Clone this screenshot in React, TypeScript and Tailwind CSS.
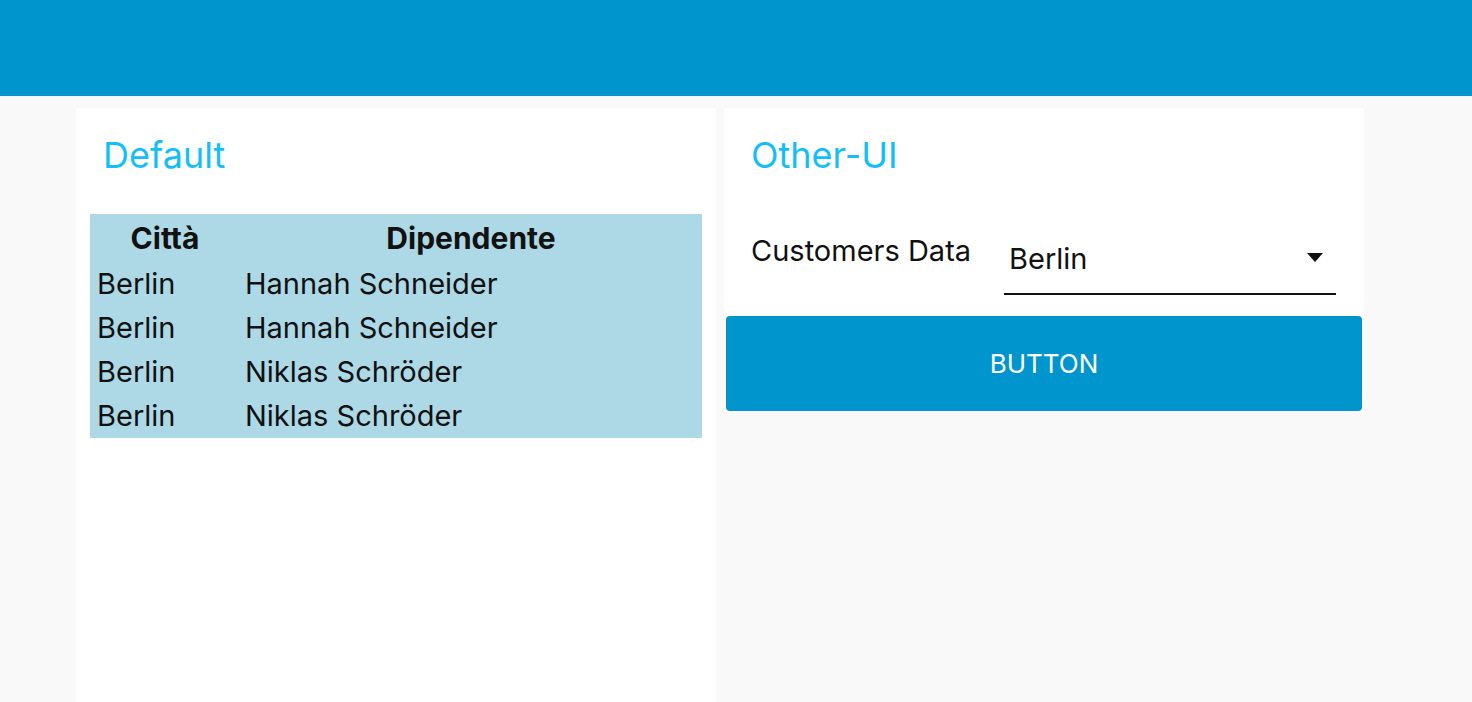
import React from 'react';

interface Row {
    city: string;
    employee: string;
}

const rows: Row[] = [
    { city: 'Berlin', employee: 'Hannah Schneider' },
    { city: 'Berlin', employee: 'Hannah Schneider' },
    { city: 'Berlin', employee: 'Niklas Schröder' },
    { city: 'Berlin', employee: 'Niklas Schröder' },
];

export default function App() {
    return (
        <div className="min-h-screen bg-[#f9f9f9] font-['Inter','Liberation_Sans',sans-serif] text-[#111]">
            {/* Barra superiore */}
            <div className="h-[96px] bg-[#0095cc]" />

            <div className="flex items-start gap-2 pl-[76px] pt-3">
                {/* Card sinistra */}
                <div className="w-[640px] h-[600px] bg-white">
                    <h2 className="pl-[27px] mt-[25px] text-[36px] leading-[44px] text-[#14bef7]">Default</h2>
                    <table className="mx-[14px] mt-[37px] w-[612px] bg-[#add8e6] text-[29px] border-collapse">
                        <thead>
                            <tr className="h-[48px]">
                                <th className="w-[150px] text-[30px] font-bold text-center">Città</th>
                                <th className="text-[30px] font-bold text-center">Dipendente</th>
                            </tr>
                        </thead>
                        <tbody>
                            {rows.map((row, i) => (
                                <tr key={i} className="h-[44px]">
                                    <td className="pl-[7px] leading-[44px]">{row.city}</td>
                                    <td className="pl-[5px] leading-[44px]">{row.employee}</td>
                                </tr>
                            ))}
                        </tbody>
                    </table>
                </div>

                {/* Card destra */}
                <div className="w-[640px] bg-white pb-[2px]">
                    <h2 className="pl-[27px] mt-[25px] text-[36px] leading-[44px] text-[#14bef7]">Other-UI</h2>
                    <div className="flex items-start mt-[56px] pl-[27px] pr-[28px]">
                        <div className="w-[253px] text-[29px] leading-9">Customers Data</div>
                        <div className="flex-1 flex items-center justify-between pt-2 pb-4 pl-[5px] pr-[13px] border-b-2 border-[#111]">
                            <span className="text-[29px] leading-9">Berlin</span>
                            <svg width="16" height="9" viewBox="0 0 16 9" className="-mt-1">
                                <path d="M0 0 L16 0 L8 9 Z" fill="#111" />
                            </svg>
                        </div>
                    </div>
                    <div className="px-[2px] mt-[21px]">
                        <button className="w-full h-[95px] rounded-[4px] bg-[#0095cc] text-white text-[26px] uppercase">
                            Button
                        </button>
                    </div>
                </div>
            </div>
        </div>
    );
}
